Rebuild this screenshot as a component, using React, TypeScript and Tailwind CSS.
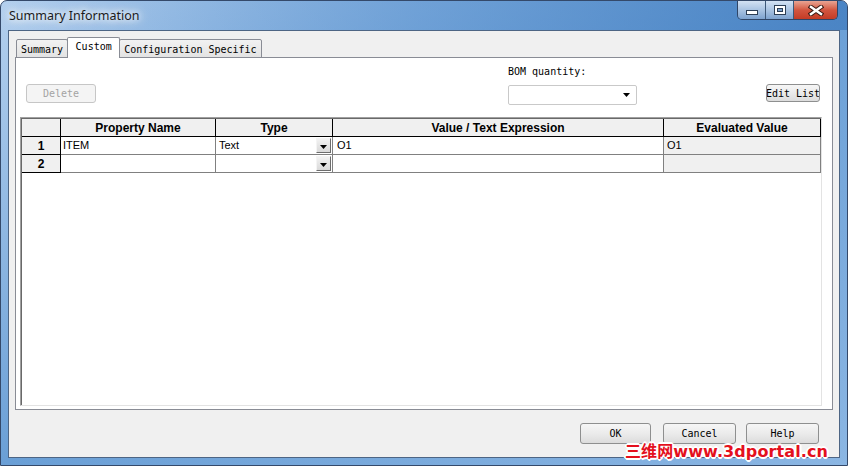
import type { ReactNode } from 'react';

// Fonts used throughout the dialog
const mono = "font-['DejaVu_Sans_Mono',monospace]";
const sans = "font-['Liberation_Sans',Arial,sans-serif]";

interface Row {
    num: number;
    name: string;
    type: string;
    value: string;
    evaluated: string;
}

const rows: Row[] = [
    { num: 1, name: 'ITEM', type: 'Text', value: 'O1', evaluated: 'O1' },
    { num: 2, name: '', type: '', value: '', evaluated: '' },
];

function DownArrow({ className = '' }: { className?: string }) {
    return (
        <svg width="7" height="4" viewBox="0 0 7 4" className={className}>
            <path d="M0 0 H7 L3.5 4 Z" fill="#000" />
        </svg>
    );
}

function WindowButtons() {
    return (
        <div className="ml-auto mr-[9px] flex h-[19px] overflow-hidden rounded-b-[5px] border border-t-0 border-[#2f4566]">
            {/* minimize */}
            <div className="flex w-[28px] items-center justify-center border-r border-[#3d5878] bg-gradient-to-b from-[#d3e2f3] via-[#a9c3e2] to-[#7ea3cf]">
                <svg width="12" height="6" viewBox="0 0 12 6" className="mt-[5px]">
                    <rect x="0.5" y="0.5" width="11" height="4" fill="#fff" stroke="#2c3e55" />
                </svg>
            </div>
            {/* maximize */}
            <div className="flex w-[28px] items-center justify-center border-r border-[#3d5878] bg-gradient-to-b from-[#d3e2f3] via-[#a9c3e2] to-[#7ea3cf]">
                <svg width="12" height="10" viewBox="0 0 12 10">
                    <rect x="0.5" y="0.5" width="11" height="9" fill="none" stroke="#2c3e55" />
                    <rect x="2" y="2" width="8" height="6" fill="none" stroke="#fff" strokeWidth="2" />
                    <rect x="3.5" y="3.5" width="5" height="3" fill="#7ea3cf" stroke="#2c3e55" />
                </svg>
            </div>
            {/* close */}
            <div className="flex w-[43px] items-center justify-center bg-gradient-to-b from-[#e8a493] via-[#d2553f] to-[#c43b25]">
                <svg width="16" height="11" viewBox="0 0 16 11">
                    <path d="M3 2 L13 9 M13 2 L3 9" stroke="#3a1a14" strokeWidth="4.5" strokeLinecap="square" />
                    <path d="M3 2 L13 9 M13 2 L3 9" stroke="#fff" strokeWidth="2.5" strokeLinecap="square" />
                </svg>
            </div>
        </div>
    );
}

function Tab({ label, active }: { label: string; active?: boolean }) {
    if (active) {
        return (
            <div className={`relative z-10 -mx-[1px] flex h-[21px] w-[53px] items-center justify-center rounded-t-[2px] border border-b-0 border-[#898c95] bg-white pb-[3px] text-[10px] text-black ${mono}`}>
                {label}
            </div>
        );
    }
    return (
        <div className={`flex h-[19px] items-center justify-center rounded-t-[2px] border border-[#898c95] bg-gradient-to-b from-[#f2f2f2] to-[#e3e3e3] px-[4px] pt-[1px] text-[10px] text-black ${mono}`}>
            {label}
        </div>
    );
}

function Button({ children, className = '', disabled }: { children: ReactNode; className?: string; disabled?: boolean }) {
    return (
        <div
            className={`flex items-center justify-center overflow-hidden whitespace-nowrap rounded-[3px] border text-[10px] ${mono} ${
                disabled
                    ? 'border-[#c6c6c6] bg-[#f4f4f4] text-[#a3a3a3]'
                    : 'border-[#8e8f8f] bg-gradient-to-b from-[#f6f6f6] via-[#ebebeb] to-[#dcdcdc] text-black'
            } ${className}`}
        >
            {children}
        </div>
    );
}

function Cell({ children, className = '' }: { children?: ReactNode; className?: string }) {
    return <div className={`flex items-center overflow-hidden whitespace-nowrap ${className}`}>{children}</div>;
}

function PropertyGrid() {
    const cols = 'grid grid-cols-[39px_155px_117px_331px_157px]';
    return (
        <div className="ml-[4px] flex h-[289px] w-[802px] border border-t-[#a0a0a0] border-l-[#a0a0a0] border-r-[#e3e3e3] border-b-[#e3e3e3]">
            <div className={`flex-1 border-t border-l border-[#696969] bg-white ${sans}`}>
                {/* header */}
                <div className={`${cols} h-[18px] border-b border-black bg-[#f0f0f0] text-[12px] font-bold text-black`}>
                    <Cell className="border-r border-black" />
                    <Cell className="justify-center border-r border-black">Property Name</Cell>
                    <Cell className="justify-center border-r border-black">Type</Cell>
                    <Cell className="justify-center border-r border-black">Value / Text Expression</Cell>
                    <Cell className="justify-center border-r border-black">Evaluated Value</Cell>
                </div>

                {/* body */}
                {rows.map((row) => (
                    <div key={row.num} className={`${cols} h-[18px] text-[11px] text-black`}>
                        <Cell className="justify-center border-r border-b border-black bg-[#f0f0f0] text-[12px] font-bold">{row.num}</Cell>
                        <Cell className="border-r border-b border-[#808080] pl-[2px]">{row.name}</Cell>
                        <Cell className="border-r border-b border-[#808080] pl-[3px]">
                            <span className="flex-1">{row.type}</span>
                            <div className="mr-[1px] flex h-[15px] w-[15px] items-center justify-center border border-t-[#f4f4f4] border-l-[#f4f4f4] border-r-[#6d6d6d] border-b-[#6d6d6d] bg-gradient-to-b from-[#f2f2f2] to-[#d9d9d9]">
                                <DownArrow className="mt-[3px]" />
                            </div>
                        </Cell>
                        <Cell className="border-r border-b border-[#808080] pl-[4px]">{row.value}</Cell>
                        <Cell className="border-r border-b border-[#808080] bg-[#f0f0f0] pl-[3px]">{row.evaluated}</Cell>
                    </div>
                ))}
            </div>
        </div>
    );
}

export default function App() {
    return (
        <div className="relative flex h-[466px] w-[848px] flex-col overflow-hidden rounded-t-[7px] border border-[#34496a] bg-gradient-to-br from-[#b4d0ee] via-[#6a9fd6] to-[#8bb6e3]">
            {/* title bar */}
            <div className="flex h-[29px] items-start bg-gradient-to-r from-transparent via-[#4f8acb]/50 to-[#3d79bd]/70">
                <div className="pl-[8px] pt-[6px] text-[12.5px] text-[#1b1b1b] [text-shadow:0_0_6px_#fff,0_0_10px_#fff,0_0_14px_#fff] font-['Noto_Sans',sans-serif]">
                    Summary Information
                </div>
                <WindowButtons />
            </div>

            {/* client area */}
            <div className="mx-[7px] mb-[7px] flex flex-1 flex-col border border-[#4d6584] bg-[#f0f0f0]">
                {/* tabs */}
                <div className="ml-[7px] mt-[6px] -mb-[1px] flex h-[21px] items-end">
                    <Tab label="Summary" />
                    <Tab label="Custom" active />
                    <Tab label="Configuration Specific" />
                </div>

                {/* tab page */}
                <div className="ml-[6px] flex h-[353px] w-[818px] flex-col border border-[#898c95] bg-white">
                    <div className="flex h-[59px]">
                        <Button disabled className="ml-[10px] mt-[26px] h-[19px] w-[70px]">Delete</Button>
                        <div className="ml-[412px] flex flex-col">
                            <span className={`mt-[6px] text-[10px] text-black ${mono}`}>BOM quantity:</span>
                            <div className="mt-[6px] flex h-[20px] w-[129px] items-center justify-end rounded-[2px] border border-[#c9c9c9] bg-white pr-[6px]">
                                <DownArrow />
                            </div>
                        </div>
                        <Button className="ml-auto mr-[12px] mt-[26px] h-[18px] w-[54px] border-[#3c3c3c] text-[10.5px]">Edit List</Button>
                    </div>
                    <PropertyGrid />
                </div>

                {/* dialog buttons */}
                <div className="mt-[13px] flex justify-end pr-[20px]">
                    <Button className="mr-[12px] h-[21px] w-[71px]">OK</Button>
                    <Button className="mr-[10px] h-[21px] w-[73px]">Cancel</Button>
                    <Button className="h-[21px] w-[73px]">Help</Button>
                </div>
            </div>

            {/* site watermark */}
            <div className="absolute bottom-[5px] right-[19px] text-[16px] font-bold leading-none tracking-[0.1px] text-[#e4101d] font-['DejaVu_Sans','Noto_Sans_CJK_SC',sans-serif] [text-shadow:1px_1px_0_#fff,-1px_-1px_0_#fff,1px_-1px_0_#fff,-1px_1px_0_#fff,2px_0_0_#fff,-2px_0_0_#fff,0_2px_0_#fff,0_-2px_0_#fff]">
                三维网www.3dportal.cn
            </div>
        </div>
    );
}
